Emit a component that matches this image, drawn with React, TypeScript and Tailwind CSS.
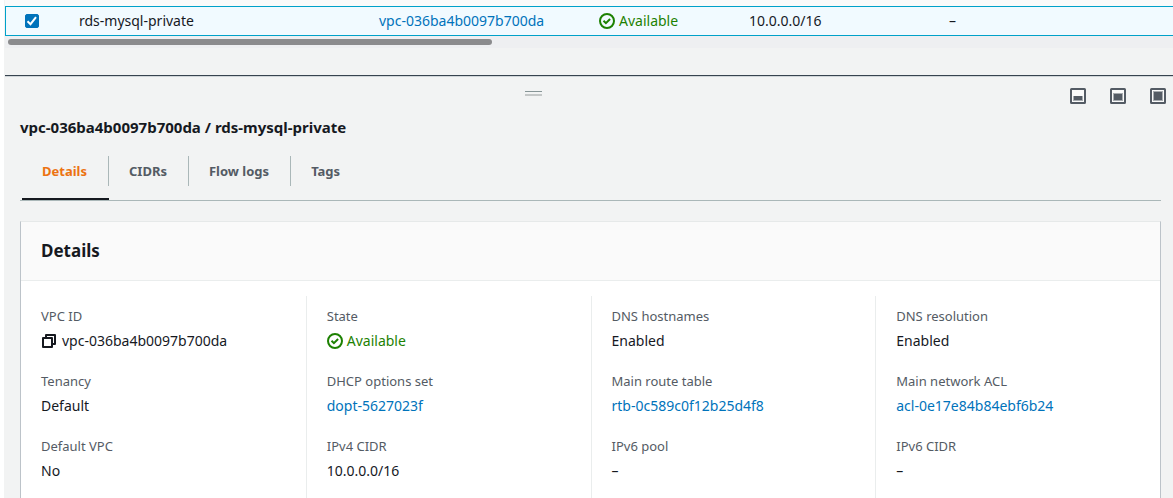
import type { ReactNode } from "react";

function StatusIcon() {
  return (
    <svg viewBox="0 0 16 16" className="size-4 shrink-0" fill="none" stroke="#1d8102" strokeWidth="2" aria-hidden="true">
      <circle cx="8" cy="8" r="7" />
      <path d="M4.5 7.8l2.4 2.4 4.2-4.2" />
    </svg>
  );
}

function Available() {
  return (
    <span className="flex items-center gap-1 text-[#1d8102]">
      <StatusIcon />
      Available
    </span>
  );
}

function CopyIcon() {
  return (
    <svg viewBox="0 0 16 16" className="size-4" fill="none" stroke="#16191f" strokeWidth="2" strokeLinejoin="round" aria-hidden="true">
      <path d="M2 5h9v9H2z" />
      <path d="M5 5V2h9v9h-3" />
    </svg>
  );
}

function PanelSizeButton({ label, fillTop, edgeTop }: { label: string; fillTop: number; edgeTop: number }) {
  return (
    <button type="button" aria-label={label} className="size-4">
      <svg viewBox="0 0 16 16" className="size-4" aria-hidden="true">
        <rect x="1" y="1" width="14" height="14" rx="0.5" fill="#fafafa" stroke="#545b64" strokeWidth="2" />
        <rect x="3" y={edgeTop} width="10" height={13 - edgeTop} fill="#545b64" opacity="0.5" />
        <rect x="4" y={fillTop} width="8" height={12 - fillTop} fill="#545b64" />
      </svg>
    </button>
  );
}

function ResourceLink({ children }: { children: ReactNode }) {
  return (
    <a href="#resource" className="text-[#0073bb]">
      {children}
    </a>
  );
}

const tabs = ["Details", "CIDRs", "Flow logs", "Tags"];

const columns: { label: string; value: ReactNode }[][] = [
  [
    {
      label: "VPC ID",
      value: (
        <span className="flex items-center gap-[5px]">
          <button type="button" aria-label="Copy VPC ID">
            <CopyIcon />
          </button>
          vpc-036ba4b0097b700da
        </span>
      ),
    },
    { label: "Tenancy", value: "Default" },
    { label: "Default VPC", value: "No" },
  ],
  [
    { label: "State", value: <Available /> },
    { label: "DHCP options set", value: <ResourceLink>dopt-5627023f</ResourceLink> },
    { label: "IPv4 CIDR", value: "10.0.0.0/16" },
  ],
  [
    { label: "DNS hostnames", value: "Enabled" },
    { label: "Main route table", value: <ResourceLink>rtb-0c589c0f12b25d4f8</ResourceLink> },
    { label: "IPv6 pool", value: "–" },
  ],
  [
    { label: "DNS resolution", value: "Enabled" },
    { label: "Main network ACL", value: <ResourceLink>acl-0e17e84b84ebf6b24</ResourceLink> },
    { label: "IPv6 CIDR", value: "–" },
  ],
];

function VpcTable() {
  return (
    <section aria-label="VPCs" className="bg-[#fafafa] pt-[6px]">
      <div className="overflow-hidden border-y border-l border-[#00a1c9] bg-[#f1faff]">
        <table className="w-full min-w-[1100px] table-fixed text-sm leading-5">
          <colgroup>
            <col className="w-[53px]" />
            <col className="w-[300px]" />
            <col className="w-[220px]" />
            <col className="w-[150px]" />
            <col className="w-[200px]" />
            <col />
          </colgroup>
          <tbody>
            <tr className="h-7">
              <td className="pl-[19px]">
                <label className="grid size-[14px]">
                  <input
                    type="checkbox"
                    defaultChecked
                    aria-label="Select rds-mysql-private"
                    className="peer col-start-1 row-start-1 size-[14px] appearance-none rounded-xs border border-[#687078] bg-white checked:border-[#0073bb] checked:bg-[#0073bb]"
                  />
                  <svg
                    viewBox="0 0 14 14"
                    className="pointer-events-none invisible col-start-1 row-start-1 size-[14px] peer-checked:visible"
                    fill="none"
                    stroke="white"
                    strokeWidth="2"
                    aria-hidden="true"
                  >
                    <path d="M2.5 7.2l3 3 5.5-7" />
                  </svg>
                </label>
              </td>
              <td className="pl-5">rds-mysql-private</td>
              <td className="pl-5">
                <ResourceLink>vpc-036ba4b0097b700da</ResourceLink>
              </td>
              <td className="pl-5">
                <Available />
              </td>
              <td className="pl-5">10.0.0.0/16</td>
              <td className="pl-5">–</td>
            </tr>
          </tbody>
        </table>
      </div>
      <div className="bg-[#eeeff1] px-[3px] py-[3px]">
        <div className="h-[6px] w-5/12 rounded-full bg-[#8b8b8d]" />
      </div>
    </section>
  );
}

export default function App() {
  return (
    <div className="flex min-h-screen flex-col bg-white pl-1 font-['Noto_Sans','Open_Sans',sans-serif] text-[13px] leading-5 text-[#16191f]">
      <div className="flex flex-1 flex-col bg-[#f2f3f3] pl-px">
        <VpcTable />
        <section aria-label="VPC details" className="mt-[27px] flex flex-1 flex-col border-t border-[#37434f] shadow-[inset_0_1px_0_#d0d5d8]">
          <div className="flex pr-[7px]">
            <div className="flex flex-1 justify-center pt-[15px]">
              <div role="separator" aria-label="Resize panel" className="h-[5px] w-[17px] border-t border-b-2 border-t-[#879596] border-b-[#c4c7c7]" />
            </div>
            <div className="flex gap-6 pt-3 pl-2">
              <PanelSizeButton label="Small panel" fillTop={8} edgeTop={8} />
              <PanelSizeButton label="Medium panel" fillTop={6} edgeTop={5} />
              <PanelSizeButton label="Full panel" fillTop={4} edgeTop={3} />
            </div>
          </div>
          <div className="flex flex-1 flex-col pr-3 pl-[15px]">
            <h2 className="mt-[13px] text-[15px] leading-5 font-bold">vpc-036ba4b0097b700da / rds-mysql-private</h2>
            <div role="tablist" className="mt-[19px] flex border-b border-[#aab7b8] pl-0.5">
              {tabs.map((tab, i) => (
                <button
                  key={tab}
                  type="button"
                  role="tab"
                  aria-selected={i === 0}
                  className="group border-b-2 border-transparent pb-3 font-bold text-[#545b64] aria-selected:border-[#16191f] aria-selected:text-[#ec7211]"
                >
                  <span className="block border-r border-[#aab7b8] py-[5px] pr-[21px] pl-5 group-last:border-r-0">{tab}</span>
                </button>
              ))}
            </div>
            <section className="mt-5 flex flex-1 flex-col border-x border-t border-x-[#bcc3c9] border-t-[#e6e9e9] bg-white">
              <header className="border-b border-[#eaeded] bg-[#fafafa] px-5 py-4">
                <h3 className="text-[17px] leading-[26px] font-bold">Details</h3>
              </header>
              <div className="grid flex-1 grid-cols-4 pt-[15px]">
                {columns.map((fields) => (
                  <dl key={fields[0].label} className="flex flex-col gap-5 border-l border-[#eaeded] pt-[10px] pl-5 first:border-l-0">
                    {fields.map((field) => (
                      <div key={field.label}>
                        <dt className="text-[#545b64]">{field.label}</dt>
                        <dd className="mt-[5px] text-sm leading-5">{field.value}</dd>
                      </div>
                    ))}
                  </dl>
                ))}
              </div>
            </section>
          </div>
        </section>
      </div>
    </div>
  );
}
